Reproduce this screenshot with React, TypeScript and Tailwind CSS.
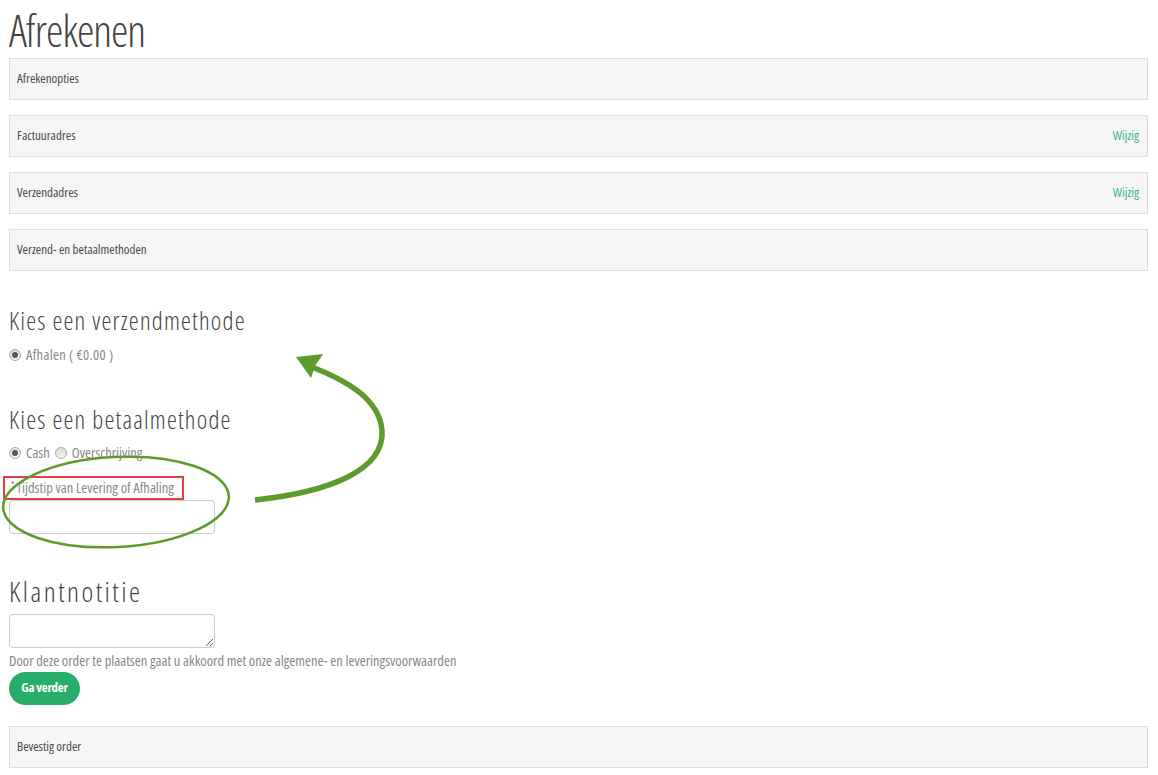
import React from "react";

function Panel({ title, action }: { title: string; action?: string }) {
  return (
    <div className="flex h-[42px] items-center justify-between border border-[#dddddd] bg-[#f6f6f6] pl-[7px] pr-[8px]">
      <span className="text-[13px] font-medium text-[#4a4a4a]">{title}</span>
      {action && <span className="text-[13px] text-[#3db487]">{action}</span>}
    </div>
  );
}

function Radio({ checked }: { checked?: boolean }) {
  return (
    <span className="inline-flex h-[12px] w-[12px] shrink-0 items-center justify-center rounded-full border border-[#a9a9a9] bg-gradient-to-b from-[#dcdcdc] to-[#f4f4f4]">
      {checked && <span className="h-[6px] w-[6px] rounded-full bg-[#5a5a5a]" />}
    </span>
  );
}

export default function App() {
  return (
    <div className="relative min-h-[775px] w-full bg-white pl-[9px] pr-[10px] font-['Open_Sans',sans-serif] font-stretch-condensed">
      <h1 className="pt-[6px] text-[44px] font-light leading-[48px] tracking-[-1px] text-[#444444]">Afrekenen</h1>
      <div className="mt-[4px] flex flex-col gap-[15px]">
        <Panel title="Afrekenopties" />
        <Panel title="Factuuradres" action="Wijzig" />
        <Panel title="Verzendadres" action="Wijzig" />
        <Panel title="Verzend- en betaalmethoden" />
      </div>

      <h2 className="mt-[34px] text-[25px] font-light leading-[30px] tracking-[1.2px] text-[#444444]">Kies een verzendmethode</h2>
      <div className="mt-[9px] flex items-center gap-[5px] text-[14.5px] text-[#888888]">
        <Radio checked />
        <span className="tracking-[0.3px]">Afhalen ( €0.00 )</span>
      </div>

      <h2 className="mt-[38px] text-[25px] font-light leading-[30px] tracking-[1.2px] text-[#444444]">Kies een betaalmethode</h2>
      <div className="mt-[8px] flex items-center gap-[5px] text-[14.5px] text-[#888888]">
        <Radio checked />
        <span>Cash</span>
        <Radio />
        <span>Overschrijving</span>
      </div>
      <div className="mt-[14px] flex items-start text-[14.5px] leading-[20px] text-[#888888]">
        <span className="ml-[2px] text-[9px] leading-[14px] text-[#e04a4a]">*</span>
        <span className="ml-[2px]">Tijdstip van Levering of Afhaling</span>
      </div>
      <input className="mt-[2px] block h-[34px] w-[206px] rounded-[4px] border border-[#cccccc] bg-white" />

      <h2 className="mt-[41px] text-[28px] font-light leading-[32px] tracking-[2.5px] text-[#444444]">Klantnotitie</h2>
      <textarea className="mt-[7px] block h-[34px] w-[206px] rounded-[4px] border border-[#cccccc] bg-white" />
      <p className="mt-[4px] text-[14.5px] leading-[18px] text-[#888888]">
        Door deze order te plaatsen gaat u akkoord met onze algemene- en leveringsvoorwaarden
      </p>
      <button className="mt-[2px] flex h-[33px] w-[71px] items-center justify-center rounded-full bg-[#28ae6a] text-[13px] font-bold tracking-[-0.3px] text-white">
        Ga verder
      </button>
      <div className="mt-[21px]">
        <Panel title="Bevestig order" />
      </div>

      <svg className="pointer-events-none absolute left-0 top-0" width="1158" height="775" viewBox="0 0 1158 775">
        <rect x="4" y="477" width="179" height="22" fill="none" stroke="#e0403f" strokeWidth="2" />
        <ellipse cx="116" cy="502" rx="113" ry="45" fill="none" stroke="#5d9c2c" strokeWidth="2.5" transform="rotate(-3 116 502)" />
        <path d="M255,500 C330,492 385,470 382,430 C379,398 345,380 312,367" fill="none" stroke="#5d9c2c" strokeWidth="5.5" />
        <path d="M296,357 L323,354 L315,366 L311,378 Z" fill="#5d9c2c" />
      </svg>
    </div>
  );
}
